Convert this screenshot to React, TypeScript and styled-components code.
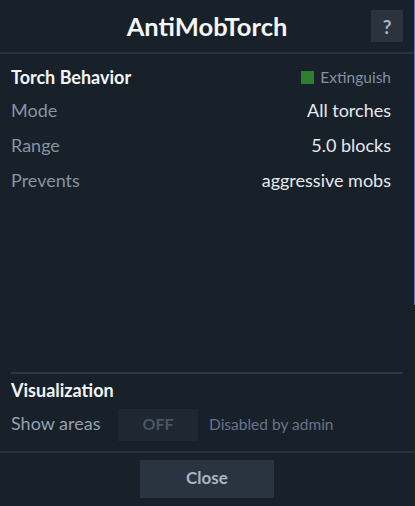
import React from 'react';
import styled, { createGlobalStyle } from 'styled-components';

const GlobalStyle = createGlobalStyle`
  html, body {
    margin: 0;
    padding: 0;
  }
  body {
    width: 415px;
    height: 506px;
    overflow: hidden;
    background: linear-gradient(to bottom, #6b70c4 0, #6b70c4 305px, #1c2a14 305px);
    font-family: Lato, 'Noto Sans', sans-serif;
  }
`;

const Panel = styled.div`
  width: 414px;
  height: 506px;
  background: #18202a;
  display: flex;
  flex-direction: column;
  box-sizing: border-box;
`;

const Header = styled.header`
  height: 52px;
  flex-shrink: 0;
  position: relative;
  display: flex;
  align-items: center;
  justify-content: center;
  border-bottom: 2px solid #28313c;
`;

const Title = styled.h1`
  margin: 0;
  font-size: 25.5px;
  font-weight: 700;
  color: #f4f6f8;
`;

const HelpButton = styled.button`
  position: absolute;
  right: 11px;
  top: 10px;
  width: 32px;
  height: 32px;
  border: 0;
  padding: 0;
  background: #2a333e;
  color: #a9b5c4;
  font-family: inherit;
  font-size: 19px;
  font-weight: 700;
  cursor: pointer;
`;

const Content = styled.main`
  flex: 1;
  display: flex;
  flex-direction: column;
  padding: 6px 11px 0;
`;

const Row = styled.div<{ $height?: number }>`
  height: ${({ $height }) => $height ?? 35}px;
  display: flex;
  align-items: center;
  justify-content: space-between;
  padding-right: 12px;
`;

const SectionTitle = styled.h2`
  margin: 0;
  font-size: 18px;
  font-weight: 700;
  color: #f2f4f6;
`;

const Status = styled.div`
  display: flex;
  align-items: center;
  gap: 6px;
  font-size: 15.5px;
  color: #8590a0;
`;

const Swatch = styled.span<{ $color: string }>`
  width: 13px;
  height: 13px;
  background: ${({ $color }) => $color};
`;

const Label = styled.span`
  font-size: 18px;
  line-height: 22px;
  padding-bottom: 3px;
  color: #8793a3;
`;

const Value = styled(Label)`
  color: #e6e9ed;
`;

const Visualization = styled.section`
  margin-top: auto;
  border-top: 2px solid #2c3541;
  padding-bottom: 8px;
`;

const SettingRow = styled.div`
  height: 37px;
  display: flex;
  align-items: center;
`;

const SettingLabel = styled(Label)`
  color: #95a1b0;
  width: 107px;
`;

const Toggle = styled.button`
  width: 80px;
  height: 32px;
  border: 0;
  padding: 0 0 2px;
  background: #1f2732;
  color: #4a5566;
  font-family: inherit;
  font-size: 16px;
  font-weight: 700;
  cursor: not-allowed;
`;

const Hint = styled.span`
  margin-left: 11px;
  padding-bottom: 2px;
  font-size: 15.5px;
  color: #67748a;
`;

const Footer = styled.footer`
  flex-shrink: 0;
  border-top: 2px solid #28313c;
  display: flex;
  justify-content: center;
  padding: 7px 0 8px;
`;

const CloseButton = styled.button`
  width: 134px;
  height: 38px;
  border: 0;
  padding: 0 0 3px;
  background: #2a3440;
  color: #a7b5c5;
  font-family: inherit;
  font-size: 17px;
  font-weight: 700;
  cursor: pointer;
`;

const rows = [
  { label: 'Mode', value: 'All torches' },
  { label: 'Range', value: '5.0 blocks' },
  { label: 'Prevents', value: 'aggressive mobs' },
];

export default function App() {
  return (
    <>
      <GlobalStyle />
      <Panel>
        <Header>
          <Title>AntiMobTorch</Title>
          <HelpButton>?</HelpButton>
        </Header>
        <Content>
          <Row $height={34}>
            <SectionTitle>Torch Behavior</SectionTitle>
            <Status>
              <Swatch $color="#2e7d32" />
              Extinguish
            </Status>
          </Row>
          {rows.map((r) => (
            <Row key={r.label}>
              <Label>{r.label}</Label>
              <Value>{r.value}</Value>
            </Row>
          ))}
          <Visualization>
            <Row $height={32}>
              <SectionTitle>Visualization</SectionTitle>
            </Row>
            <SettingRow>
              <SettingLabel>Show areas</SettingLabel>
              <Toggle disabled>OFF</Toggle>
              <Hint>Disabled by admin</Hint>
            </SettingRow>
          </Visualization>
        </Content>
        <Footer>
          <CloseButton>Close</CloseButton>
        </Footer>
      </Panel>
    </>
  );
}
